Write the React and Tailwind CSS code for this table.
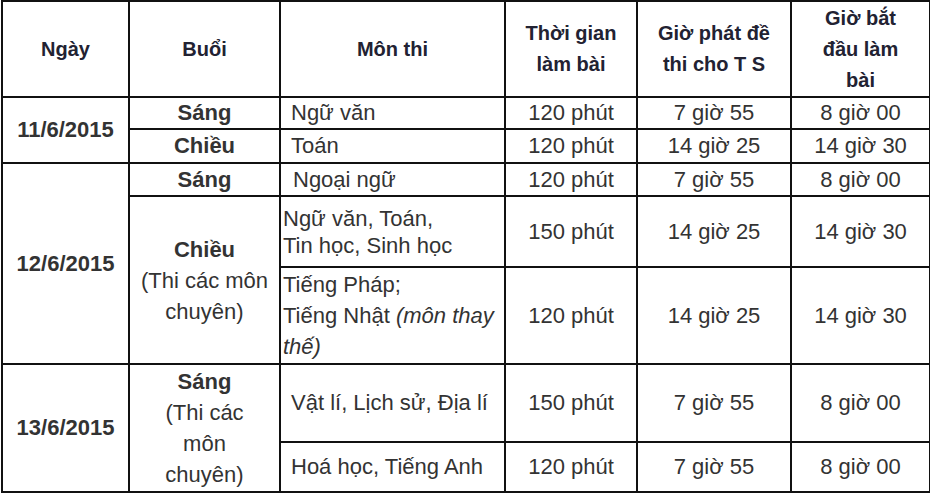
const rows = [];

const td = "border-2 border-[#111] px-1 py-0 text-center align-middle";
const tdLeft = "border-2 border-[#111] py-0 text-left align-middle";

export default function App() {
  return (
    <div className="w-[930px] h-[497px] bg-white overflow-hidden">
      <table
        className="table-fixed border-collapse w-[928px] ml-[1px] text-[22px] text-[#333]"
        style={{ fontFamily: '"Liberation Sans", Arial, sans-serif' }}
      >
        <colgroup>
          <col className="w-[127px]" />
          <col className="w-[151px]" />
          <col className="w-[225px]" />
          <col className="w-[132px]" />
          <col className="w-[154px]" />
          <col className="w-[139px]" />
        </colgroup>
        <thead>
          <tr className="h-[96px] text-[20px] font-bold text-[#222232] leading-[31px]">
            <th className={td}>Ngày</th>
            <th className={td}>Buổi</th>
            <th className={td}>Môn thi</th>
            <th className={td}>
              Thời gian
              <br />
              làm bài
            </th>
            <th className={td}>
              Giờ phát đề
              <br />
              thi cho T S
            </th>
            <th className={td}>
              Giờ bắt
              <br />
              đầu làm
              <br />
              bài
            </th>
          </tr>
        </thead>
        <tbody className="leading-[26px]">
          {/* 11/6 */}
          <tr className="h-[32px]">
            <td rowSpan={2} className={td + " font-bold"}>
              11/6/2015
            </td>
            <td className={td + " font-bold"}>Sáng</td>
            <td className={tdLeft + " pl-[10px]"}>Ngữ văn</td>
            <td className={td}>120 phút</td>
            <td className={td}>7 giờ 55</td>
            <td className={td}>8 giờ 00</td>
          </tr>
          <tr className="h-[34px]">
            <td className={td + " font-bold"}>Chiều</td>
            <td className={tdLeft + " pl-[10px]"}>Toán</td>
            <td className={td}>120 phút</td>
            <td className={td}>14 giờ 25</td>
            <td className={td}>14 giờ 30</td>
          </tr>

          {/* 12/6 */}
          <tr className="h-[33px]">
            <td rowSpan={3} className={td + " font-bold"}>
              12/6/2015
            </td>
            <td className={td + " font-bold"}>Sáng</td>
            <td className={tdLeft + " pl-[12px]"}>Ngoại ngữ</td>
            <td className={td}>120 phút</td>
            <td className={td}>7 giờ 55</td>
            <td className={td}>8 giờ 00</td>
          </tr>
          <tr className="h-[71px]">
            <td rowSpan={2} className={td + " leading-[31px]"}>
              <span className="font-bold">Chiều</span>
              <br />
              (Thi các môn
              <br />
              chuyên)
            </td>
            <td className={tdLeft + " pl-[2px] leading-[27px]"}>
              Ngữ văn, Toán,
              <br />
              Tin học, Sinh học
            </td>
            <td className={td}>150 phút</td>
            <td className={td}>14 giờ 25</td>
            <td className={td}>14 giờ 30</td>
          </tr>
          <tr className="h-[97px]">
            <td className={tdLeft + " pl-[2px] leading-[31px]"}>
              Tiếng Pháp;
              <br />
              Tiếng Nhật <i>(môn thay</i>
              <br />
              <i>thế)</i>
            </td>
            <td className={td}>120 phút</td>
            <td className={td}>14 giờ 25</td>
            <td className={td}>14 giờ 30</td>
          </tr>

          {/* 13/6 */}
          <tr className="h-[78px]">
            <td rowSpan={2} className={td + " font-bold"}>
              13/6/2015
            </td>
            <td rowSpan={2} className={td + " leading-[31px]"}>
              <span className="font-bold">Sáng</span>
              <br />
              (Thi các
              <br />
              môn
              <br />
              chuyên)
            </td>
            <td className={tdLeft + " pl-[10px]"}>Vật lí, Lịch sử, Địa lí</td>
            <td className={td}>150 phút</td>
            <td className={td}>7 giờ 55</td>
            <td className={td}>8 giờ 00</td>
          </tr>
          <tr className="h-[50px]">
            <td className={tdLeft + " pl-[10px]"}>Hoá học, Tiếng Anh</td>
            <td className={td}>120 phút</td>
            <td className={td}>7 giờ 55</td>
            <td className={td}>8 giờ 00</td>
          </tr>
        </tbody>
      </table>
    </div>
  );
}
